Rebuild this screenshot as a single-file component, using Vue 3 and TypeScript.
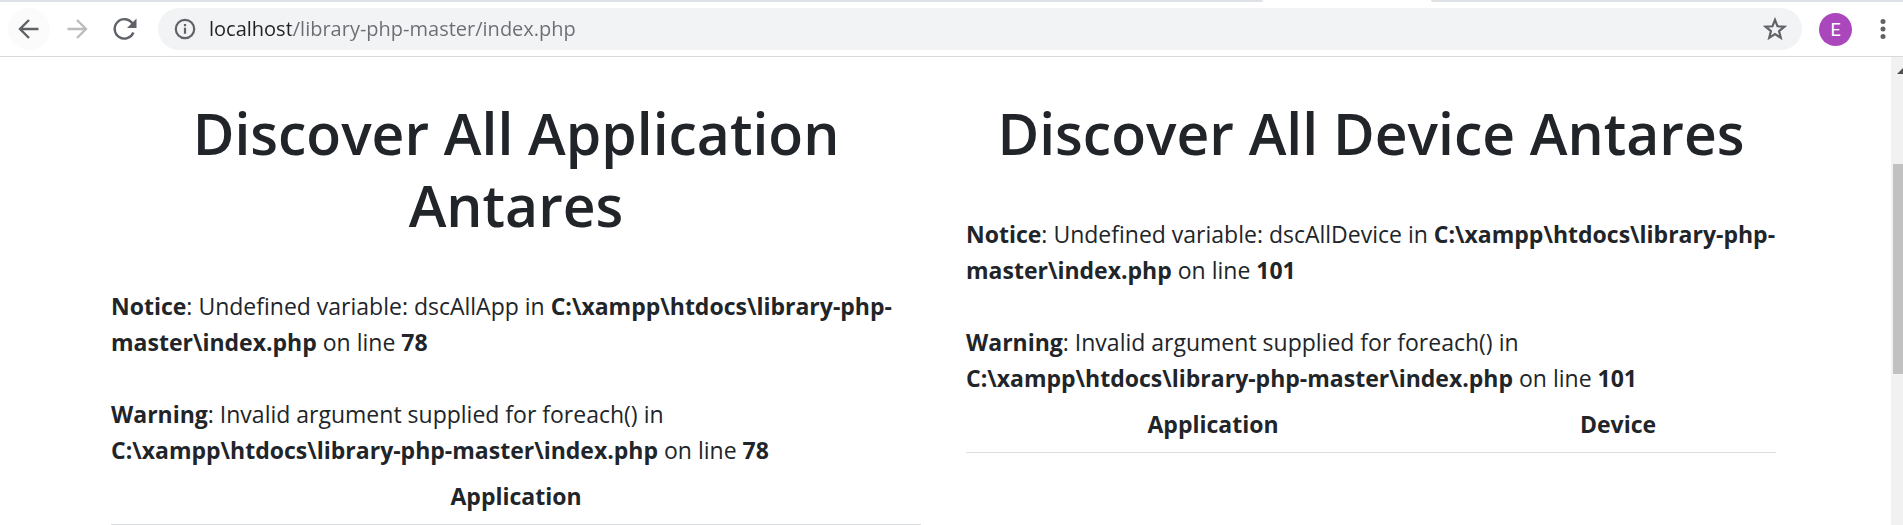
<script setup lang="ts">
import { ref } from 'vue'

interface Message {
  level: string
  text: string
}

interface Panel {
  title: string
  line: number
  messages: Message[]
  columns: string[]
}

const file = 'C:\\xampp\\htdocs\\library-php-master\\index.php'
const address = ref('localhost/library-php-master/index.php')

const panels: Panel[] = [
  {
    title: 'Discover All Application Antares',
    line: 78,
    messages: [
      { level: 'Notice', text: 'Undefined variable: dscAllApp in' },
      { level: 'Warning', text: 'Invalid argument supplied for foreach() in' },
    ],
    columns: ['Application'],
  },
  {
    title: 'Discover All Device Antares',
    line: 101,
    messages: [
      { level: 'Notice', text: 'Undefined variable: dscAllDevice in' },
      { level: 'Warning', text: 'Invalid argument supplied for foreach() in' },
    ],
    columns: ['Application', 'Device'],
  },
]
</script>

<template>
  <div class="browser">
    <div class="tabs"><span class="tab-rest"></span><span class="tab-active"></span><span class="tab-end"></span></div>
    <header class="toolbar">
      <button class="nav hovered" type="button" aria-label="Back">
        <svg viewBox="0 0 24 24"><path d="M21.5 12H3.5M12 3L3 12l9 9" /></svg>
      </button>
      <button class="nav" type="button" aria-label="Forward" disabled>
        <svg viewBox="0 0 24 24"><path d="M2.500 12h18M12 3l9 9-9 9" /></svg>
      </button>
      <button class="nav" type="button" aria-label="Reload">
        <svg viewBox="0 0 24 24">
          <path d="M20.400 15.500A9.700 9.700 0 1 1 19.500 6.500" />
          <path class="solid" d="M23.500 1.500v9.500H14z" />
        </svg>
      </button>
      <div class="omnibox">
        <svg class="info" viewBox="0 0 22 22" aria-hidden="true">
          <circle cx="11" cy="11" r="9.200" />
          <path d="M11 9.800v6M11 6v2.300" />
        </svg>
        <input v-model="address" class="address" type="text" aria-label="Address" spellcheck="false" />
        <button class="star" type="button" aria-label="Bookmark this page">
          <svg viewBox="0 0 22 22">
            <path d="M11 2.600l2.300 5.900 6.300.4-4.900 4 1.600 6.200L11 15.700l-5.300 3.400 1.600-6.200-4.900-4 6.300-.4z" />
          </svg>
        </button>
      </div>
      <button class="avatar" type="button" aria-label="Profile">E</button>
      <button class="menu" type="button" aria-label="Menu">
        <svg viewBox="0 0 6 22">
          <circle cx="3" cy="3.500" r="2.500" />
          <circle cx="3" cy="11" r="2.500" />
          <circle cx="3" cy="18.500" r="2.500" />
        </svg>
      </button>
    </header>

    <div class="viewport">
      <main class="page">
        <div class="row">
          <section v-for="panel in panels" :key="panel.title" class="panel">
            <h1>{{ panel.title }}</h1>
            <p v-for="message in panel.messages" :key="message.level">
              <b>{{ message.level }}</b>: {{ message.text }} <b>{{ file }}</b> on line <b>{{ panel.line }}</b>
            </p>
            <table>
              <thead>
                <tr>
                  <th v-for="column in panel.columns" :key="column" scope="col">{{ column }}</th>
                </tr>
              </thead>
            </table>
          </section>
        </div>
      </main>
      <div class="scrollbar" aria-hidden="true">
        <svg class="arrow" viewBox="0 0 12 6"><path d="M6 0l6 6H0z" /></svg>
        <div class="thumb"></div>
      </div>
    </div>
  </div>
</template>

<style>
body {
  margin: 0;
  background: #fff;
}
</style>

<style scoped>
.browser {
  display: flex;
  flex-direction: column;
  height: 100vh;
  overflow: hidden;
  color: #212529;
  font-family: 'Segoe UI', 'Open Sans', 'Noto Sans', sans-serif;
}

.browser * {
  box-sizing: border-box;
}

button {
  display: flex;
  align-items: center;
  justify-content: center;
  padding: 0;
  border: 0;
  background: none;
}

.tabs {
  display: flex;
  flex: none;
  height: 2px;
}

.tab-rest {
  flex: 1263;
  background: #dee1e6;
  border-bottom-right-radius: 2px;
}

.tab-active {
  flex: 168;
}

.tab-end {
  flex: 472;
  background: #dee1e6;
  border-bottom-left-radius: 2px;
}

.toolbar {
  display: flex;
  flex: none;
  align-items: center;
  height: 55px;
  padding: 0 17px 0 8px;
  border-bottom: 1px solid #d9dadc;
}

.nav {
  flex: none;
  width: 42px;
  height: 42px;
  margin-right: 6px;
  border-radius: 50%;
}

.nav.hovered {
  background: #fbfbfb;
}

.nav svg {
  width: 24px;
  height: 24px;
  fill: none;
  stroke: #5f6368;
  stroke-width: 2.400;
}

.nav:disabled svg {
  stroke: #babcbe;
}

.nav .solid {
  fill: #5f6368;
  stroke: none;
}

.omnibox {
  display: flex;
  flex: 1;
  align-items: center;
  height: 42px;
  margin-left: 6px;
  padding: 0 15px 0 16px;
  border-radius: 21px;
  background: #f1f3f4;
}

.info {
  flex: none;
  width: 22px;
  height: 22px;
  margin-right: 13px;
  fill: none;
  stroke: #5f6368;
  stroke-width: 2.200;
}

.address {
  flex: 1;
  min-width: 0;
  height: 32px;
  padding: 0;
  border: 0;
  outline: 0;
  background: linear-gradient(90deg, #202124 82px, #6a6e73 82px);
  background-clip: text;
  color: #5f6368;
  -webkit-text-fill-color: transparent;
  font: 20px/32px 'Segoe UI', 'Open Sans', 'Noto Sans', sans-serif;
}

.star svg {
  width: 24px;
  height: 24px;
  fill: none;
  stroke: #5f6368;
  stroke-width: 2;
}

.avatar {
  flex: none;
  width: 33px;
  height: 33px;
  margin-left: 17px;
  border-radius: 50%;
  background: #ab47bc;
  color: #fff;
  font: 18px/33px Roboto, sans-serif;
}

.menu {
  flex: none;
  margin-left: 28px;
}

.menu svg {
  width: 6px;
  height: 22px;
  fill: #5f6368;
}

.viewport {
  display: flex;
  flex: 1;
  min-height: 0;
}

.page {
  flex: 1;
  min-width: 0;
  padding: 40px 4px 0 0;
  overflow: hidden;
}

.row {
  display: grid;
  grid-template-columns: 1fr 1fr;
  gap: 45px;
  padding: 0 111px;
}

h1 {
  margin: 0 0 47px;
  font-size: 57px;
  font-weight: 600;
  line-height: 72px;
  text-align: center;
}

p {
  margin: 0 -4px 0 0;
  font-size: 23px;
  line-height: 36px;
}

p + p {
  margin-top: 36px;
}

b {
  font-weight: 700;
}

table {
  width: 100%;
  border-collapse: collapse;
}

th {
  padding: 10px 12px;
  border-bottom: 1px solid #dcdee0;
  font-size: 23px;
  line-height: 36px;
  text-align: center;
}

th:first-child:not(:last-child) {
  width: 61%;
}

.scrollbar {
  display: flex;
  flex-direction: column;
  flex: none;
  align-items: flex-end;
  width: 12px;
  padding-top: 11px;
  overflow: hidden;
  background: #f1f1f1;
}

.arrow {
  flex: none;
  width: 12px;
  height: 6px;
  margin-right: -6px;
  fill: #505050;
}

.thumb {
  width: 10px;
  height: 210px;
  margin-top: 90px;
  background: #c1c1c1;
}
</style>
